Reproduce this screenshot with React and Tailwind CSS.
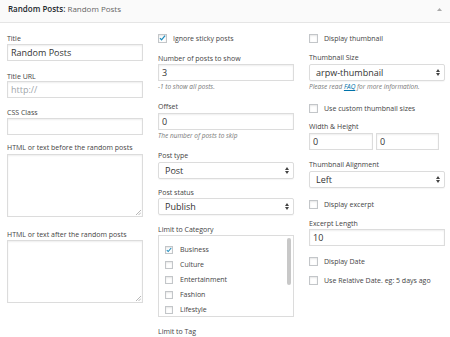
import React from "react";

const font = { fontFamily: "'Open Sans', 'Liberation Sans', sans-serif" };

const Label = ({ children, className = "" }) => (
  <div className={`text-[7px] leading-[8px] text-[#444] ${className}`}>{children}</div>
);

const Hint = ({ children, className = "" }) => (
  <div className={`mt-[2px] text-[6.5px] leading-[8px] italic text-[#777] ${className}`}>{children}</div>
);

const Input = ({ value, placeholder, className = "" }) => (
  <div
    className={`h-[17px] border border-[#dcdcdc] bg-white px-[3px] flex items-center text-[9px] shadow-[inset_0_1px_2px_rgba(0,0,0,0.07)] ${className}`}
  >
    {value ? <span className="text-[#333]">{value}</span> : <span className="text-[#a0a5aa]">{placeholder}</span>}
  </div>
);

const Select = ({ value, className = "" }) => (
  <div
    className={`h-[17px] border border-[#dcdcdc] bg-white pl-[6px] pr-[4px] flex items-center justify-between text-[9px] text-[#333] rounded-[2px] shadow-[0_1px_1px_rgba(0,0,0,0.04)] ${className}`}
  >
    <span>{value}</span>
    <svg width="4" height="7" viewBox="0 0 4 7">
      <path d="M0 3 L2 0 L4 3 Z M0 4 L2 7 L4 4 Z" fill="#444" />
    </svg>
  </div>
);

const Textarea = ({ className = "" }) => (
  <div className={`relative border border-[#dcdcdc] bg-white shadow-[inset_0_1px_2px_rgba(0,0,0,0.07)] ${className}`}>
    <svg className="absolute right-[1px] bottom-[1px]" width="5" height="5" viewBox="0 0 5 5">
      <path d="M5 0 L0 5 M5 2.5 L2.5 5" stroke="#999" strokeWidth="0.7" />
    </svg>
  </div>
);

const Checkbox = ({ checked, size = "w-[9px] h-[9px]" }) => (
  <div
    className={`${size} shrink-0 border border-[#c3c6c9] bg-white shadow-[inset_0_1px_2px_rgba(0,0,0,0.1)] flex items-center justify-center`}
  >
    {checked && (
      <svg width="9" height="8" viewBox="0 0 9 8" className="mt-[-1px]">
        <path d="M1.2 4.2 L3.3 6.3 L7.8 1" fill="none" stroke="#1e8cbe" strokeWidth="1.6" />
      </svg>
    )}
  </div>
);

const CheckRow = ({ checked, label, className = "" }) => (
  <div className={`flex items-center gap-[6px] ${className}`}>
    <Checkbox checked={checked} />
    <span className="text-[7px] leading-[8px] text-[#444]">{label}</span>
  </div>
);

const categories = [
  { name: "Business", checked: true },
  { name: "Culture" },
  { name: "Entertainment" },
  { name: "Fashion" },
  { name: "Lifestyle" },
];

export default function App() {
  return (
    <div className="w-[450px] h-[337px] bg-white overflow-hidden" style={font}>
      <div className="h-[23px] bg-[#fafafa] border-b border-[#e5e5e5] flex items-start justify-between pt-[4px] pl-[8px] pr-[8px]">
        <div className="text-[8px] leading-[10px] text-[#23282d]">
          <span className="font-semibold">Random Posts:</span>
          <span className="text-[#666]"> Random Posts</span>
        </div>
        <svg width="5" height="3" viewBox="0 0 5 3" className="mt-[4px]">
          <path d="M0 3 L2.5 0 L5 3 Z" fill="#aaa" />
        </svg>
      </div>

      <div className="grid grid-cols-[136px_136px_136px] gap-x-[15px] pl-[7px]">
        {/* column 1 */}
        <div className="pt-[12px]">
          <Label className="mb-[1px]">Title</Label>
          <Input value="Random Posts" />
          <Label className="mt-[12px]">Title URL</Label>
          <Input placeholder="http://" />
          <Label className="mt-[11px] mb-[1px]">CSS Class</Label>
          <Input />
          <Label className="mt-[9px] mb-[2px]">HTML or text before the random posts</Label>
          <Textarea className="h-[63px]" />
          <Label className="mt-[14px] mb-[1px]">HTML or text after the random posts</Label>
          <Textarea className="h-[63px]" />
        </div>

        {/* column 2 */}
        <div className="pt-[11px]">
          <CheckRow checked label="Ignore sticky posts" />
          <Label className="mt-[12px] mb-[1px]">Number of posts to show</Label>
          <Input value="3" />
          <Hint>-1 to show all posts.</Hint>
          <Label className="mt-[12px] mb-[2px]">Offset</Label>
          <Input value="0" />
          <Hint>The number of posts to skip</Hint>
          <Label className="mt-[12px] mb-[2px]">Post type</Label>
          <Select value="Post" />
          <Label className="mt-[10px] mb-[1px]">Post status</Label>
          <Select value="Publish" />
          <Label className="mt-[11px] mb-[1px]">Limit to Category</Label>
          <div className="h-[82px] border border-[#dcdcdc] bg-white flex">
            <div className="flex-1 pt-[10px] pl-[6px] flex flex-col gap-[7px]">
              {categories.map((c) => (
                <div key={c.name} className="flex items-center gap-[7px]">
                  <Checkbox checked={c.checked} size="w-[8px] h-[8px]" />
                  <span className="text-[7px] leading-[8px] text-[#444]">{c.name}</span>
                </div>
              ))}
            </div>
            <div className="w-[8px] pt-[2px] flex justify-center">
              <div className="w-[4px] h-[47px] rounded-full bg-[#c8c8c8]" />
            </div>
          </div>
          <Label className="mt-[11px]">Limit to Tag</Label>
        </div>

        {/* column 3 */}
        <div className="pt-[11px]">
          <CheckRow label="Display thumbnail" />
          <Label className="mt-[11px] mb-[2px]">Thumbnail Size</Label>
          <Select value="arpw-thumbnail" />
          <Hint>
            Please read <span className="text-[#0073aa] underline">FAQ</span> for more information.
          </Hint>
          <CheckRow className="mt-[13px]" label="Use custom thumbnail sizes" />
          <Label className="mt-[10px] mb-[2px]">Width &amp; Height</Label>
          <div className="flex gap-[3px]">
            <Input value="0" className="w-[64px] h-[16px]" />
            <Input value="0" className="w-[63px] h-[16px]" />
          </div>
          <Label className="mt-[11px] mb-[2px]">Thumbnail Alignment</Label>
          <Select value="Left" className="h-[16px]" />
          <CheckRow className="mt-[12px]" label="Display excerpt" />
          <Label className="mt-[11px] mb-[1px]">Excerpt Length</Label>
          <Input value="10" className="h-[16px]" />
          <CheckRow className="mt-[11px]" label="Display Date" />
          <CheckRow className="mt-[10px]" label="Use Relative Date. eg: 5 days ago" />
        </div>
      </div>
    </div>
  );
}
